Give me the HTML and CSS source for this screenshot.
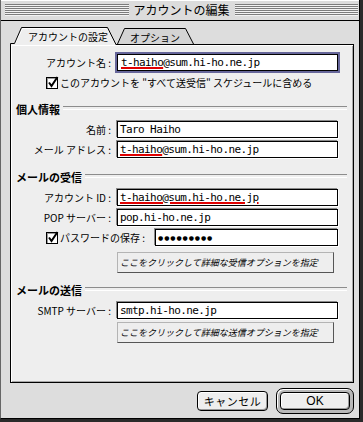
FILE: index.html
```html
<!DOCTYPE html>
<html lang="ja">
<head>
    <meta charset="UTF-8">
    <title>アカウントの編集</title>
    <link rel="stylesheet" href="styles.css">
</head>
<body>
    <div class="window">
        <div class="titlebar">
            <div class="stripes"></div>
            <div class="title">アカウントの編集</div>
            <div class="stripes"></div>
        </div>

        <div class="window-body">
            <div class="tabs">
                <div class="tab tab-active">
                    <svg class="tab-shape" width="108" height="19" viewBox="0 0 108 19">
                        <path d="M1 19V18H5L12 2H97L106 19Z" fill="#eeeeee"/>
                        <path d="M5.5 17L12.5 2.5H96" fill="none" stroke="#ffffff"/>
                        <path d="M0.5 19V17.5H4.5L11.5 1.5H97.5L106 18.5" fill="none" stroke="#000"/>
                    </svg>
                    <span class="tab-label">アカウントの設定</span>
                </div>
                <div class="tab tab-back">
                    <svg class="tab-shape" width="77" height="19" viewBox="0 0 77 19">
                        <path d="M1 18L8 2.5H68L76 18Z" fill="#d4d4d4"/>
                        <path d="M0.5 18L7.5 2.5H68.5L76.5 18" fill="none" stroke="#000"/>
                    </svg>
                    <span class="tab-label">オプション</span>
                </div>
            </div>

            <div class="panel">
                <div class="row">
                    <span class="label">アカウント名 :</span>
                    <div class="field field-focus"><span class="mark">t-haiho</span>@sum.hi-ho.ne.jp</div>
                </div>
                <div class="check-row">
                    <svg class="checkbox" width="13" height="13" viewBox="0 0 13 13">
                        <rect x="0.5" y="1.5" width="11" height="11" fill="#fff" stroke="#000"/>
                        <path d="M1 2h10v1H2v9H1z" fill="#9a9a9a"/>
                        <path d="M3 6.5l2.5 3.5L11.5 1" fill="none" stroke="#000" stroke-width="2"/>
                    </svg>
                    <span>このアカウントを "すべて送受信" スケジュールに含める</span>
                </div>

                <div class="section section-first">個人情報</div>
                <div class="row row-near">
                    <span class="label">名前 :</span>
                    <div class="field">Taro Haiho</div>
                </div>
                <div class="row row-tight">
                    <span class="label">メール アドレス :</span>
                    <div class="field"><span class="mark">t-haiho</span>@sum.hi-ho.ne.jp</div>
                </div>

                <div class="section">メールの受信</div>
                <div class="row row-near">
                    <span class="label">アカウント ID :</span>
                    <div class="field"><span class="mark">t-haiho@sum.hi-ho.ne.jp</span></div>
                </div>
                <div class="row row-tight">
                    <span class="label">POP サーバー :</span>
                    <div class="field">pop.hi-ho.ne.jp</div>
                </div>
                <div class="row row-tight row-check">
                    <svg class="checkbox" width="13" height="13" viewBox="0 0 13 13">
                        <rect x="0.5" y="1.5" width="11" height="11" fill="#fff" stroke="#000"/>
                        <path d="M1 2h10v1H2v9H1z" fill="#9a9a9a"/>
                        <path d="M3 6.5l2.5 3.5L11.5 1" fill="none" stroke="#000" stroke-width="2"/>
                    </svg>
                    <span>パスワードの保存 :</span>
                    <div class="field field-pass"><span class="dots">●●●●●●●●●</span></div>
                </div>
                <button class="option-btn">ここをクリックして詳細な受信オプションを指定</button>

                <div class="section section-send">メールの送信</div>
                <div class="row row-near">
                    <span class="label">SMTP サーバー :</span>
                    <div class="field">smtp.hi-ho.ne.jp</div>
                </div>
                <button class="option-btn option-btn-send">ここをクリックして詳細な送信オプションを指定</button>
            </div>

            <div class="footer">
                <button class="btn btn-cancel">キャンセル</button>
                <div class="default-ring">
                    <button class="btn btn-ok">OK</button>
                </div>
            </div>
        </div>
    </div>
</body>
</html>
```

FILE: styles.css
```css
:root {
    --window: #dddddd;
    --panel: #eeeeee;
    --ink: #000000;
    --shade: #8a8a8a;
    --focus: #66669a;
    --mark: #e00000;
}

* {
    box-sizing: border-box;
    margin: 0;
    padding: 0;
}

html,
body {
    width: 363px;
    height: 422px;
    overflow: hidden;
    background-color: #2a2a2a;
}

body {
    font-family: "Noto Sans CJK JP", "Noto Sans", sans-serif;
    font-size: 10px;
    color: var(--ink);
}

.window {
    width: 360px;
    height: 419px;
    background-color: var(--window);
    border-left: 1px solid #666666;
    border-right: 1px solid #000000;
    border-bottom: 1px solid #000000;
    display: flex;
    flex-direction: column;
}

/* Title bar */
.titlebar {
    height: 21px;
    flex-shrink: 0;
    display: flex;
    align-items: center;
    padding: 0 1px 0 4px;
    border-bottom: 1px solid #000000;
    background-color: #dcdcdc;
    box-shadow: inset 0 1px 0 #ffffff;
}

.stripes {
    flex: 1;
    height: 12px;
    background: repeating-linear-gradient(to bottom, #7c7c7c 0 1px, #f2f2f2 1px 2px);
}

.title {
    padding: 0 5px;
    font-size: 12px;
    line-height: 20px;
    white-space: nowrap;
}

.window-body {
    flex: 1;
    display: flex;
    flex-direction: column;
    padding: 5px 5px 0 9px;
}

/* Tabs */
.tabs {
    display: flex;
    height: 19px;
    flex-shrink: 0;
    position: relative;
    z-index: 2;
}

.tab {
    position: relative;
    height: 19px;
}

.tab-active {
    width: 108px;
    z-index: 2;
}

.tab-back {
    width: 77px;
    margin-left: -1px;
}

.tab-shape {
    position: absolute;
    left: 0;
    top: 0;
}

.tab-label {
    position: relative;
    display: block;
    line-height: 19px;
    padding-top: 1px;
    white-space: nowrap;
}

.tab-active .tab-label {
    padding-left: 18px;
}

.tab-back .tab-label {
    padding-left: 13px;
    padding-top: 2px;
}

/* Panel */
.panel {
    position: relative;
    z-index: 1;
    margin-top: -1px;
    height: 339px;
    flex-shrink: 0;
    background-color: var(--panel);
    border: 1px solid #000000;
    box-shadow: inset 1px 1px 0 #ffffff, inset -1px -1px 0 #a8a8a8;
    padding: 9px 15px 0 0;
}

.row {
    display: flex;
    align-items: center;
    height: 17px;
}

.row-near {
    margin-top: 5px;
}

.row-tight {
    margin-top: 3px;
}

.label {
    width: 100px;
    margin-right: 6px;
    text-align: right;
    white-space: nowrap;
}

.field {
    width: 221px;
    height: 17px;
    border: 1px solid #000000;
    background-color: #ffffff;
    box-shadow: -1px -1px 0 var(--shade), 1px 1px 0 #ffffff;
    padding-left: 2px;
    font-family: "DejaVu Sans Mono", "Liberation Mono", monospace;
    font-size: 11px;
    letter-spacing: -0.6px;
    line-height: 15px;
    white-space: nowrap;
    overflow: hidden;
}

.field-focus {
    padding-left: 3px;
    box-shadow: 0 0 0 2px var(--focus);
}

.mark {
    text-decoration: underline;
    text-decoration-color: var(--mark);
    text-decoration-thickness: 2px;
    text-underline-offset: 1px;
}

.check-row {
    display: flex;
    align-items: center;
    height: 13px;
    margin-top: 5px;
    padding-left: 35px;
    white-space: nowrap;
}

.checkbox {
    flex-shrink: 0;
    margin-right: 1px;
}

.row-check {
    padding-left: 35px;
}

.row-check .field {
    margin-left: auto;
}

.field-pass {
    width: 183px;
}

.dots {
    font-family: "DejaVu Sans", sans-serif;
    font-size: 6px;
    letter-spacing: 0.9px;
    position: relative;
    top: -1px;
}

/* Section headers with etched rule */
.section {
    display: flex;
    align-items: center;
    height: 14px;
    margin-top: 12px;
    margin-right: -9px;
    padding-left: 5px;
    font-size: 11px;
    font-weight: bold;
    white-space: nowrap;
}

.section::after {
    content: "";
    flex: 1;
    height: 2px;
    margin-left: 3px;
    margin-bottom: 2px;
    border-top: 1px solid #8c8c8c;
    border-bottom: 1px solid #ffffff;
}

.section-first {
    margin-top: 13px;
}

.section-send {
    margin-top: 10px;
}

.option-btn {
    display: block;
    width: 217px;
    height: 21px;
    margin: 6px 0 0 106px;
    padding-left: 2px;
    text-align: left;
    font-family: "Noto Sans CJK JP", sans-serif;
    font-size: 9px;
    font-style: italic;
    color: var(--ink);
    background-color: #eeeeee;
    border: 1px solid #b4b4b4;
    border-right-color: #555555;
    border-bottom-color: #555555;
    white-space: nowrap;
}

.option-btn-send {
    margin-top: 3px;
}

/* Footer buttons */
.footer {
    flex: 1;
    display: flex;
    justify-content: flex-end;
    align-items: center;
    gap: 8px;
}

.btn {
    font-family: "Noto Sans CJK JP", sans-serif;
    color: var(--ink);
    background-color: #eeeeee;
    border: 1px solid #000000;
    border-radius: 4px;
    box-shadow: inset 1px 1px 0 #ffffff, inset -1px -1px 0 #9a9a9a;
}

.btn-cancel {
    width: 71px;
    height: 20px;
    font-size: 11px;
    letter-spacing: 0.5px;
}

.default-ring {
    width: 78px;
    height: 26px;
    padding: 3px;
    border: 1px solid #000000;
    border-radius: 7px;
    background-color: #b8b8b8;
    box-shadow: inset 1px 1px 0 #ffffff;
}

.btn-ok {
    display: block;
    width: 70px;
    height: 18px;
    font-family: "Liberation Sans", sans-serif;
    font-size: 12px;
}
```
